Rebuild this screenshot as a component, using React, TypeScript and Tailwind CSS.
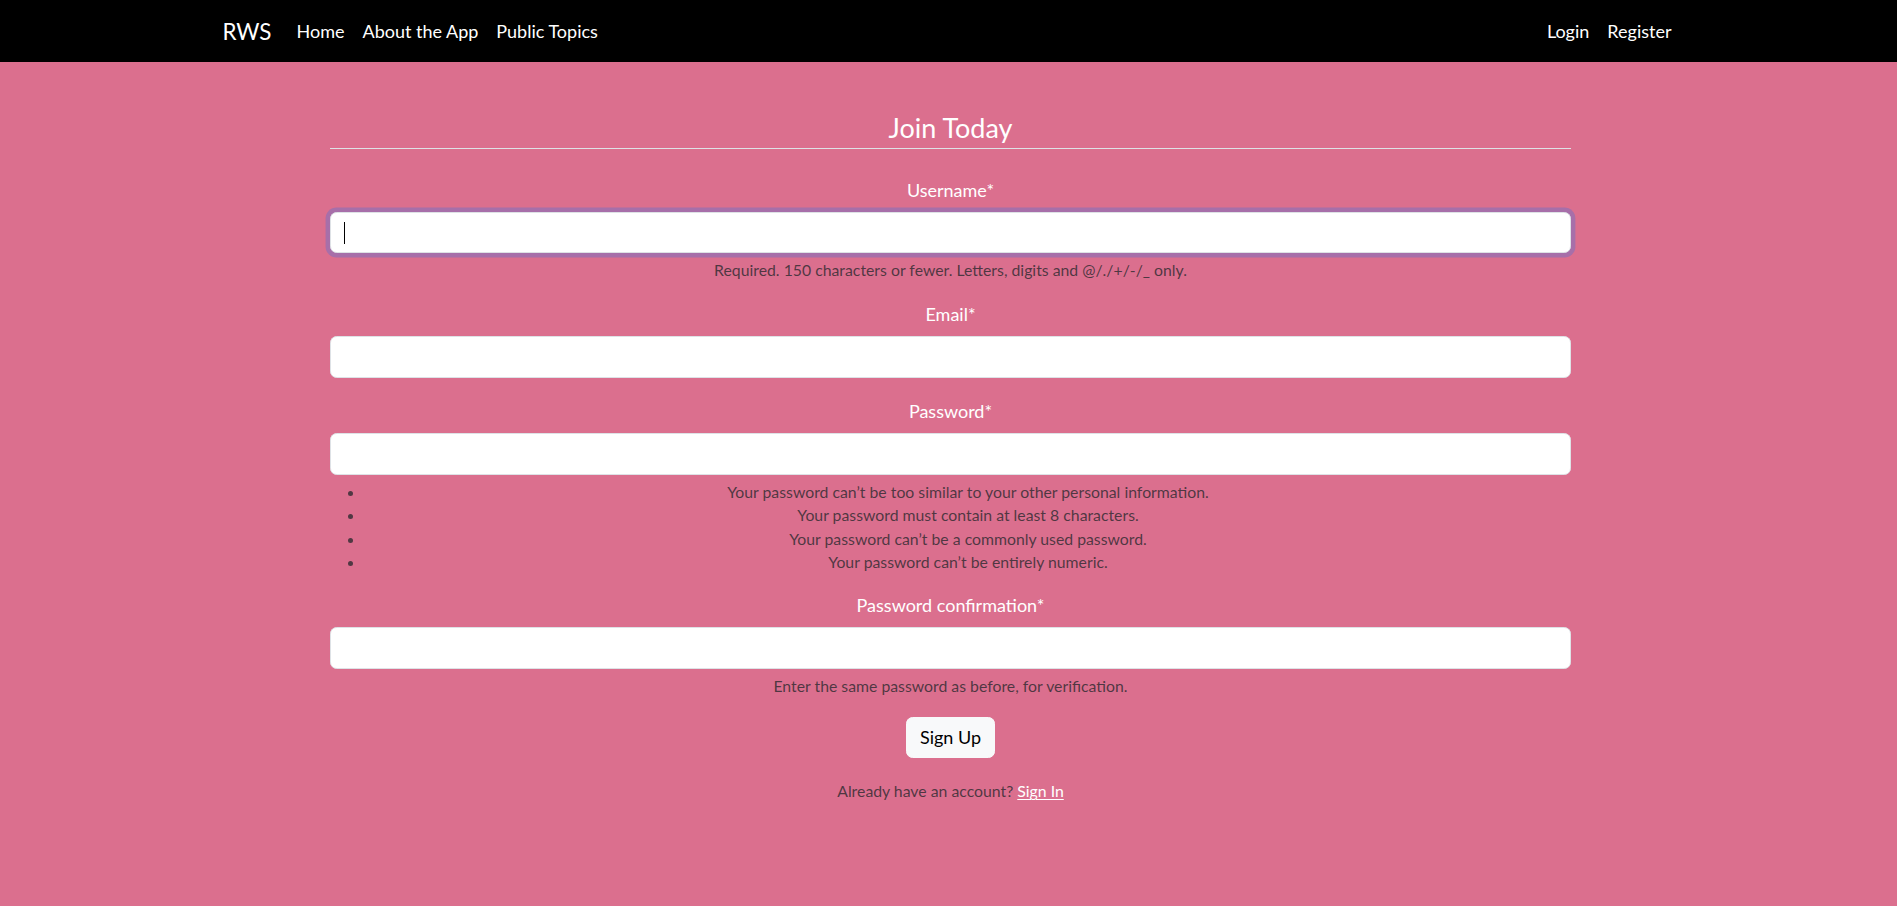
import React from 'react';

const helpCls = 'text-[15.8px] leading-[23px] text-[rgba(33,37,41,0.75)]';
const inputCls =
  'block h-[41.8px] w-full rounded-[6.6px] border border-[#dee2e6] bg-white px-[13px] text-[17.6px] text-[#212529] outline-none';
const navLink = 'px-[9px] text-[18px] leading-[26px] text-white';

function Field({
  label,
  type,
  focused,
  gap = 'mb-[20px]',
  children,
}: {
  label: string;
  type: string;
  focused?: boolean;
  gap?: string;
  children?: React.ReactNode;
}) {
  return (
    <div className={gap}>
      <label className="mb-[9px] block text-[18px] leading-[26px] text-white">{label}</label>
      {focused ? (
        <div className="relative">
          <input
            type={type}
            className={inputCls + ' border-[#86b7fe] shadow-[0_0_0_4.4px_rgba(13,110,253,0.25)]'}
          />
          <span className="absolute left-[14px] top-[10px] h-[22px] w-px bg-black" />
        </div>
      ) : (
        <input type={type} className={inputCls} />
      )}
      {children}
    </div>
  );
}

export default function App(): React.JSX.Element {
  const rules = [
    'Your password can’t be too similar to your other personal information.',
    'Your password must contain at least 8 characters.',
    'Your password can’t be a commonly used password.',
    'Your password can’t be entirely numeric.',
  ];

  return (
    <div className="min-h-screen bg-[#db6f8e] font-['Lato',sans-serif]">
      <nav className="h-[62px] bg-black">
        <div className="mx-auto flex h-full w-[1452px] items-center">
          <a href="#" className="mr-[16px] text-[22.4px] leading-[33px] text-white">
            RWS
          </a>
          <ul className="flex">
            <li>
              <a href="#" className={navLink}>
                Home
              </a>
            </li>
            <li>
              <a href="#" className={navLink}>
                About the App
              </a>
            </li>
            <li>
              <a href="#" className={navLink}>
                Public Topics
              </a>
            </li>
          </ul>
          <ul className="ml-auto mr-[-6px] flex">
            <li>
              <a href="#" className={navLink}>
                Login
              </a>
            </li>
            <li>
              <a href="#" className={navLink}>
                Register
              </a>
            </li>
          </ul>
        </div>
      </nav>

      <main className="ml-[330px] w-[1241px] pt-[46px] text-center">
        <form>
          <fieldset>
            <legend className="w-full border-b border-[#dee2e6] text-[27px] leading-[39.6px] text-white">
              Join Today
            </legend>
            <div className="mt-[28px]">
              <Field label="Username*" type="text" focused>
                <div className={'mt-[5px] ' + helpCls}>
                  Required. 150 characters or fewer. Letters, digits and @/./+/-/_ only.
                </div>
              </Field>
              <Field label="Email*" type="email" />
              <Field label="Password*" type="password" gap="mb-[18px]">
                <ul className="mt-[5px] list-disc pl-[35px] text-[15.8px] leading-[23.5px] text-[rgba(33,37,41,0.75)]">
                  {rules.map((r) => (
                    <li key={r}>{r}</li>
                  ))}
                </ul>
              </Field>
              <Field label="Password confirmation*" type="password">
                <div className={'mt-[5px] ' + helpCls}>
                  Enter the same password as before, for verification.
                </div>
              </Field>
            </div>
          </fieldset>
          <button
            type="button"
            className="rounded-[6.6px] border border-[#f8f9fa] bg-[#f8f9fa] px-[13px] py-[6.6px] text-[18px] leading-[26.4px] text-black"
          >
            Sign Up
          </button>
        </form>
        <div className={'mt-[21px] ' + helpCls}>
          Already have an account?{' '}
          <a href="#" className="text-white underline underline-offset-2">
            Sign In
          </a>
        </div>
      </main>
    </div>
  );
}
